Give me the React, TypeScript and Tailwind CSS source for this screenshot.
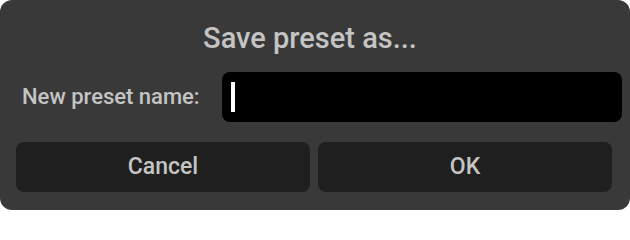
import React from "react";

export default function App() {
  return (
    <div className="w-[630px] h-[210px] bg-white" style={{ fontFamily: "Roboto, 'Liberation Sans', sans-serif" }}>
      <div className="h-full w-full rounded-[12px] bg-[#393939] flex flex-col">
        <div className="h-[72px] flex items-center justify-center pt-[4px] pr-[10px]">
          <span className="text-[29px] font-medium text-[#c4c4c4] leading-none">Save preset as...</span>
        </div>
        <div className="flex items-center h-[50px] pl-[22px] pr-[8px]">
          <span className="flex-1 text-[22px] font-medium text-[#c4c4c4] leading-none">New preset name:</span>
          <div className="w-[400px] h-[50px] bg-black rounded-[8px] flex items-center pl-[9px]">
            <div className="w-[4px] h-[30px] bg-white" />
          </div>
        </div>
        <div className="flex gap-2 pl-4 pr-[18px] mt-[20px]">
          <button className="flex-1 h-[50px] rounded-[8px] bg-[#1f1f1f] text-[23px] font-medium text-[#c4c4c4] flex items-center justify-center">
            Cancel
          </button>
          <button className="flex-1 h-[50px] rounded-[8px] bg-[#1f1f1f] text-[23px] font-medium text-[#c4c4c4] flex items-center justify-center">
            OK
          </button>
        </div>
      </div>
    </div>
  );
}
